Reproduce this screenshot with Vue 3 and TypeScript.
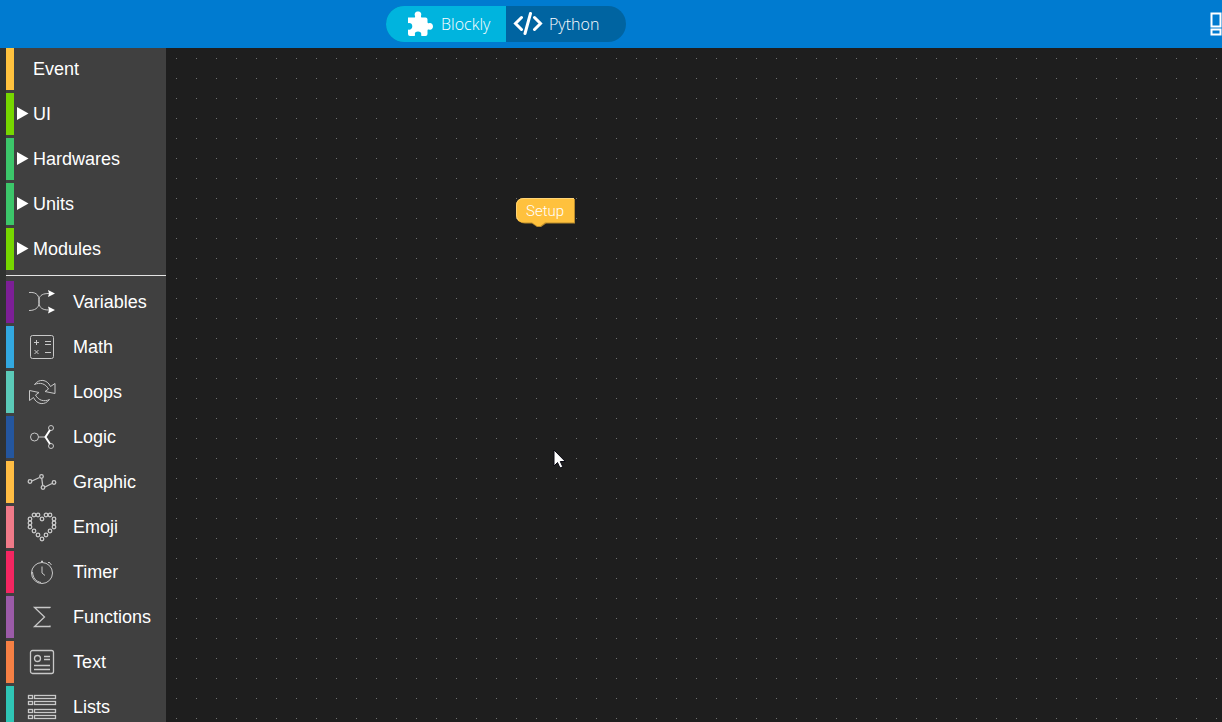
<script setup lang="ts">
import { ref } from 'vue'

interface Category {
  name: string
  color: string
  nested?: boolean
}

const mode = ref<'blockly' | 'python'>('blockly')

const groups: Category[] = [
  { name: 'Event', color: '#ffc23e' },
  { name: 'UI', color: '#77d700', nested: true },
  { name: 'Hardwares', color: '#3cc66a', nested: true },
  { name: 'Units', color: '#3cc66a', nested: true },
  { name: 'Modules', color: '#77d700', nested: true },
]

const blocks: Category[] = [
  { name: 'Variables', color: '#7c1f96' },
  { name: 'Math', color: '#32a8e0' },
  { name: 'Loops', color: '#5bcab8' },
  { name: 'Logic', color: '#24569e' },
  { name: 'Graphic', color: '#ffbd43' },
  { name: 'Emoji', color: '#ef7a88' },
  { name: 'Timer', color: '#f32661' },
  { name: 'Functions', color: '#9b5ba8' },
  { name: 'Text', color: '#f58044' },
  { name: 'Lists', color: '#2fc5b5' },
]

const heart = [
  [6, 2], [10, 2], [18, 2], [22, 2], [2, 6], [14, 6], [26, 6], [2, 10], [26, 10],
  [2, 14], [26, 14], [6, 18], [22, 18], [10, 22], [18, 22], [14, 26],
]
const listRows = [1, 7, 15, 21]
</script>

<template>
  <div class="app">
    <header class="bar">
      <div class="modes">
        <button type="button" class="mode" :class="{ active: mode === 'blockly' }" @click="mode = 'blockly'">
          <svg class="puzzle" viewBox="0 0 26 26" aria-hidden="true">
            <path d="M1 6.500H7.500Q8.500 6.500 8 5C7 2.500 8.500 .5 11 .5S15 2.500 14 5Q13.500 6.500 15 6.500H18.500Q20.500 6.500 20.500 8.500V11Q20.500 12.800 22 12.200C24 11.500 26 13 26 15.500S24 19.300 22 18.500Q20.500 18 20.500 19.500V23Q20.500 25 18.500 25H15Q13.800 25 14.200 23.500C14.700 21.500 13 20.500 11 20.500S7.300 21.700 8 23.700Q8.400 25 7 25H3Q1 25 1 23V18.500C3 19.300 5.300 18 5.300 15.300S3 11.500 1 12.300Z" />
          </svg>
          <span>Blockly</span>
        </button>
        <button type="button" class="mode python" :class="{ active: mode === 'python' }" @click="mode = 'python'">
          <svg class="code" viewBox="0 0 30 24" aria-hidden="true">
            <path d="M8.500 5.500L2.500 11.500L8.500 17.500M21.500 5.500L27.500 11.500L21.500 17.500M17.500 1.500L12 21.500" />
          </svg>
          <span>Python</span>
        </button>
      </div>
      <button type="button" class="layout" aria-label="Layout">
        <svg viewBox="0 0 24 24" aria-hidden="true">
          <path d="M1.500 1.500H10.500V14.500H1.500ZM1.500 17.500H10.500V22.500H1.500ZM14 1.500H22V6H14ZM14 10H22V22.500H14Z" />
        </svg>
      </button>
    </header>

    <div class="body">
      <nav class="toolbox">
        <button v-for="c in groups" :key="c.name" type="button" class="category" :style="{ borderLeftColor: c.color }">
          <span class="caret"><svg v-if="c.nested" viewBox="0 0 12 14" aria-hidden="true"><path d="M0 0L11.500 6.500L0 13Z" /></svg></span>
          <span>{{ c.name }}</span>
        </button>
        <hr class="divider">
        <button v-for="c in blocks" :key="c.name" type="button" class="category" :style="{ borderLeftColor: c.color }">
          <svg class="icon" viewBox="0 0 28 28" aria-hidden="true">
            <g v-if="c.name === 'Variables'">
              <path d="M1 4.500C7 4 10.500 6 11 11.500V15C11.500 20 14.500 22 21 22M1 22.500C7 22.500 10.500 20 11 15.500V11C12 7 15 5.500 21 5.500" />
              <path class="solid" d="M20 2L27 5.500L20 9L21 5.500ZM20 18.500L27 22L20 25.500L21 22Z" />
            </g>
            <g v-else-if="c.name === 'Math'">
              <rect x="2.500" y="2.500" width="23" height="23" rx="2" />
              <path d="M6 9.500H11M8.500 7V12M17 8.500H23M17 11.500H23M6.500 17L10.500 21M10.500 17L6.500 21M17 19.500H23" />
            </g>
            <g v-else-if="c.name === 'Loops'">
              <path d="M6.500 6.500C11 .5 19 1 22.500 8.500L27 5.500V15.500L17 13.500L20.500 11C17.500 5.500 12 4 6.500 6.500ZM21.500 21.500C17 27.500 9 27 5.500 19.500L1.500 22.500V12.500L11 14.500L7.500 17C10.500 22.500 16 24 21.500 21.500Z" />
            </g>
            <g v-else-if="c.name === 'Logic'">
              <circle cx="6.500" cy="14" r="4" /><circle cx="23" cy="5" r="2.500" /><circle cx="23" cy="23" r="2.500" />
              <path d="M10.500 14H17" /><path class="thick" d="M22 7L17.500 14L22 21" />
            </g>
            <g v-else-if="c.name === 'Graphic'" class="firm">
              <circle cx="2" cy="13.500" r="1.800" /><circle cx="13.500" cy="8.500" r="1.800" /><circle cx="15" cy="19.500" r="1.800" /><circle cx="26" cy="14.500" r="1.800" />
              <path d="M4 13L11.500 9.500M13.800 10.500L14.700 17.500M17 19L24 15.500" />
            </g>
            <g v-else-if="c.name === 'Emoji'" class="firm">
              <circle v-for="(p, i) in heart" :key="i" :cx="p[0]" :cy="p[1]" r="1.800" />
            </g>
            <g v-else-if="c.name === 'Timer'">
              <circle cx="14" cy="15" r="10.500" />
              <path d="M14 8.500V15L17 17.500M14 4.500V2.500M13 3.500H15M20 5L21 4L23.500 7M4.500 14C5 20 8 23.500 13 24.500" />
            </g>
            <g v-else-if="c.name === 'Functions'" class="firm">
              <path d="M22 5V4.500H6.500L16.500 14L6.500 23.500H22V22.500" />
            </g>
            <g v-else-if="c.name === 'Text'" class="firm">
              <rect x="2.500" y="2.500" width="23" height="23" rx="2" /><circle cx="9.500" cy="10.500" r="3" />
              <path d="M16 8.500H22M16 11.500H22M6 17.500H22M6 21.500H22" />
            </g>
            <g v-else class="firm">
              <template v-for="y in listRows" :key="y">
                <rect x="0.500" :y="y + 1.5" width="4" height="3" /><rect x="6.500" :y="y + 1.5" width="21" height="3" />
              </template>
            </g>
          </svg>
          <span>{{ c.name }}</span>
        </button>
      </nav>

      <main class="workspace">
        <svg class="block" viewBox="0 0 60 30" role="img" aria-label="Setup">
          <path class="shade" d="M9 1H59V25.500H30L25 29H21L16 25.500H9Q1 25.500 1 17V9Q1 1 9 1Z" />
          <path class="face" d="M8 0H58V24.500H29L24.500 28H21L16 24.500H8Q0 24.500 0 17V8Q0 0 8 0Z" />
          <path class="shine" d="M2.500 22Q.5 20 .5 17V8Q.5 .5 8 .5H58" />
          <text x="10" y="18">Setup</text>
        </svg>
        <svg class="cursor" viewBox="0 0 14 20" aria-hidden="true">
          <path d="M1 1V17L4.500 13.500L7 19L9.800 17.800L7.300 12.500H12.300Z" />
        </svg>
      </main>
    </div>
  </div>
</template>

<style>
body {
  margin: 0;
  background: #1e1e1e;
}
</style>

<style scoped>
.app {
  display: flex;
  flex-direction: column;
  height: 100vh;
  overflow: hidden;
  font-family: "Liberation Sans", Arial, sans-serif;
}
button {
  margin: 0;
  padding: 0;
  border: 0;
  background: none;
  color: #fff;
  font: inherit;
  cursor: pointer;
}
.bar {
  display: flex;
  flex: none;
  align-items: center;
  justify-content: space-between;
  height: 48px;
  padding-left: 386px;
  background: #007bd0;
}
.modes {
  display: flex;
  height: 36px;
  border-radius: 18px;
  overflow: hidden;
  background: #0064a1;
}
.mode {
  display: flex;
  align-items: center;
  gap: 8px;
  width: 120px;
  padding-left: 21px;
  font: 300 16px "Open Sans", sans-serif;
}
.mode.python {
  gap: 6px;
  padding-left: 7px;
}
.mode.active {
  background: #00b4de;
}
.puzzle {
  width: 26px;
  height: 26px;
  fill: #fff;
}
.code {
  width: 30px;
  height: 24px;
  fill: none;
  stroke: #fff;
  stroke-width: 3;
  stroke-linecap: round;
}
.layout {
  display: flex;
  margin-right: -12px;
}
.layout svg {
  width: 24px;
  height: 24px;
  fill: none;
  stroke: #fff;
  stroke-width: 2;
}
.body {
  display: flex;
  flex: 1;
  min-height: 0;
}
.toolbox {
  display: flex;
  flex: none;
  flex-direction: column;
  gap: 3px;
  box-sizing: border-box;
  width: 166px;
  border-left: 6px solid #303231;
  background: #404040;
  overflow: hidden;
}
.category {
  display: flex;
  flex: none;
  align-items: center;
  height: 42px;
  border-left: 8px solid;
  font-size: 18px;
  text-align: left;
}
.caret {
  display: flex;
  width: 16px;
  padding-left: 3px;
}
.caret svg {
  width: 12px;
  height: 14px;
  fill: #fff;
}
.divider {
  flex: none;
  width: 100%;
  height: 1px;
  margin: 2px 0;
  border: 0;
  background: #e4e4e4;
}
.icon {
  width: 28px;
  height: 28px;
  margin: 0 17px 0 14px;
  overflow: visible;
  fill: none;
  stroke: #c8c8c8;
  stroke-width: 1;
}
.icon .firm {
  stroke-width: 1.3;
}
.icon .solid {
  fill: #fff;
  stroke: none;
}
.icon .thick {
  stroke: #fff;
  stroke-width: 2;
}
.workspace {
  position: relative;
  flex: 1;
  min-width: 0;
  background: #1e1e1e conic-gradient(from 270deg at 1px 1px, #707070 90deg, transparent 0) 10px 10px / 20px 20px;
}
.block {
  position: absolute;
  top: 150px;
  left: 350px;
  width: 60px;
  height: 30px;
}
.shade {
  fill: #b88b2c;
}
.face {
  fill: #ffc13d;
}
.shine {
  fill: none;
  stroke: #ffd477;
}
.block text {
  fill: #fff;
  font: 300 15px Roboto, sans-serif;
}
.cursor {
  position: absolute;
  top: 401px;
  left: 387px;
  width: 14px;
  height: 20px;
  fill: #fff;
  stroke: #080812;
}
</style>
